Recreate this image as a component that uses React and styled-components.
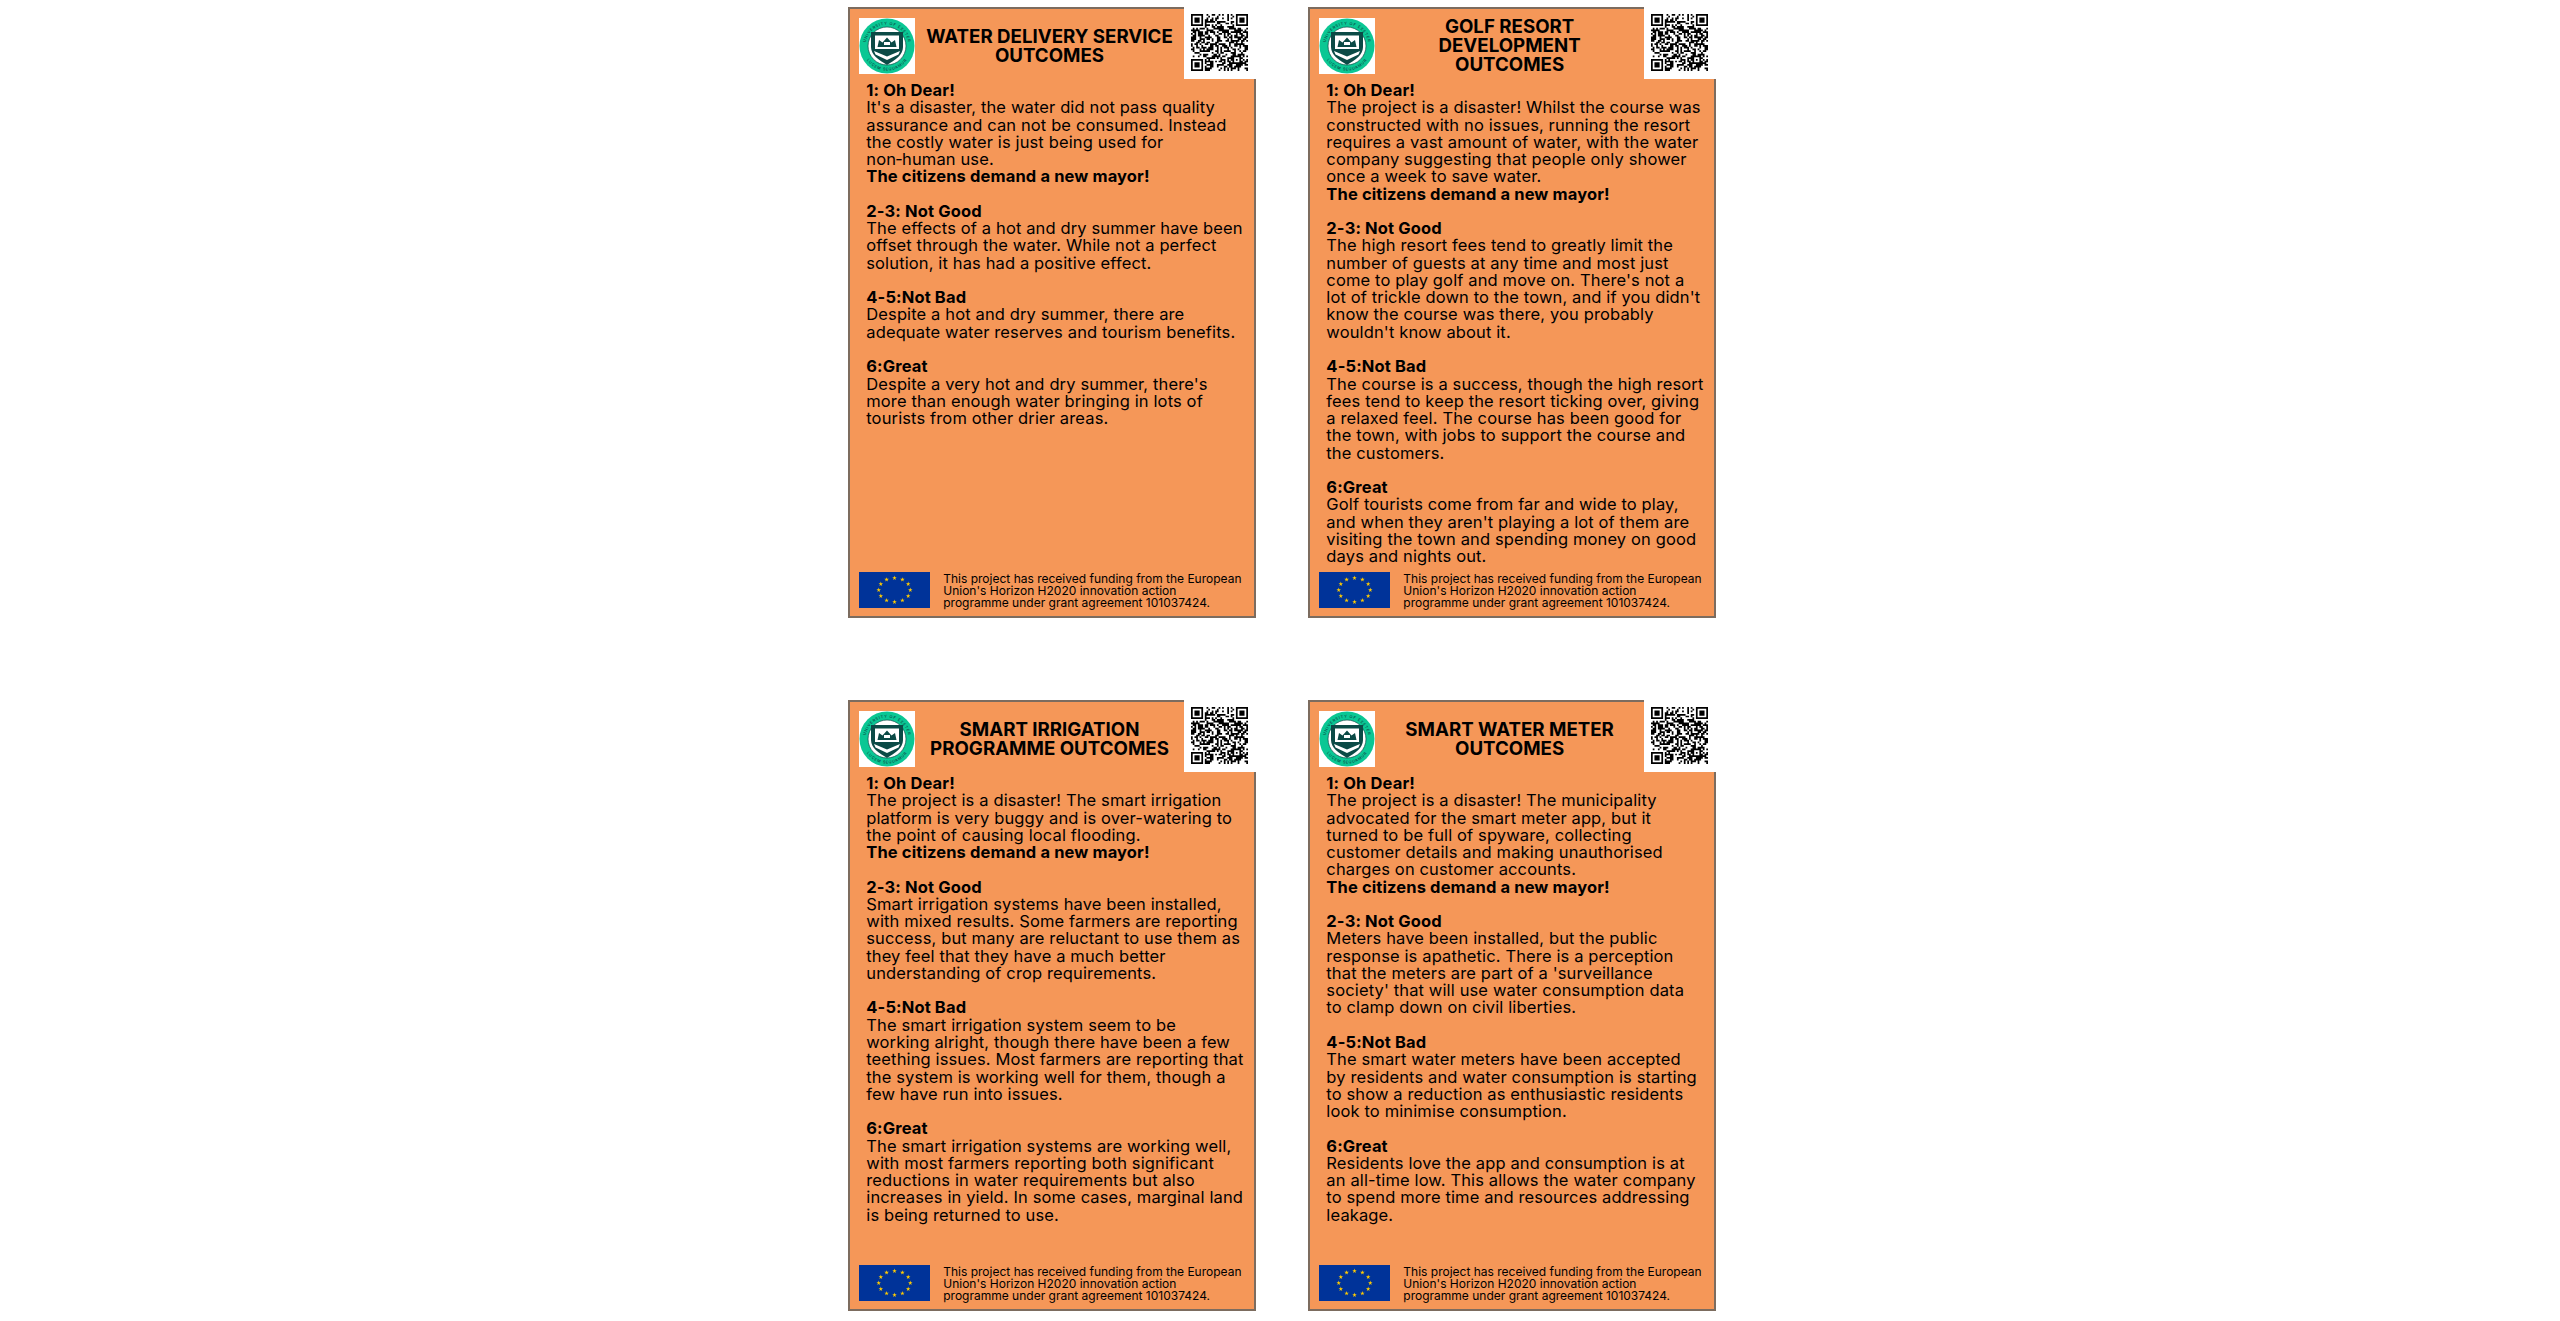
import React from 'react';
import styled, { createGlobalStyle } from 'styled-components';

const cards = [
  {
    title: 'WATER DELIVERY SERVICE OUTCOMES',
    sections: [
      ['1: Oh Dear!', "It's a disaster, the water did not pass quality assurance and can not be consumed. Instead the costly water is just being used for non\u2011human use.", 'The citizens demand a new mayor!'],
      ['2-3: Not Good', 'The effects of a hot and dry summer have been offset through the water. While not a perfect solution, it has had a positive effect.'],
      ['4-5:Not Bad', 'Despite a hot and dry summer, there are adequate water reserves and tourism benefits.'],
      ['6:Great', "Despite a very hot and dry summer, there's more than enough water bringing in lots of tourists from other drier areas."],
    ],
  },
  {
    title: 'GOLF RESORT DEVELOPMENT OUTCOMES',
    sections: [
      ['1: Oh Dear!', 'The project is a disaster! Whilst the course was constructed with no issues, running the resort requires a vast amount of water, with the water company suggesting that people only shower once a week to save water.', 'The citizens demand a new mayor!'],
      ['2-3: Not Good', "The high resort fees tend to greatly limit the number of guests at any time and most just come to play golf and move on. There's not a lot of trickle down to the town, and if you didn't know the course was there, you probably wouldn't know about it."],
      ['4-5:Not Bad', 'The course is a success, though the high resort fees tend to keep the resort ticking over, giving a relaxed feel. The course has been good for the town, with jobs to support the course and the customers.'],
      ['6:Great', "Golf tourists come from far and wide to play, and when they aren't playing a lot of them are visiting the town and spending money on good days and nights out."],
    ],
  },
  {
    title: 'SMART IRRIGATION PROGRAMME OUTCOMES',
    sections: [
      ['1: Oh Dear!', 'The project is a disaster! The smart irrigation platform is very buggy and is over-watering to the point of causing local flooding.', 'The citizens demand a new mayor!'],
      ['2-3: Not Good', 'Smart irrigation systems have been installed, with mixed results. Some farmers are reporting success, but many are reluctant to use them as they feel that they have a much better understanding of crop requirements.'],
      ['4-5:Not Bad', 'The smart irrigation system seem to be working alright, though there have been a few teething issues. Most farmers are reporting that the system is working well for them, though a few have run into issues.'],
      ['6:Great', 'The smart irrigation systems are working well, with most farmers reporting both significant reductions in water requirements but also increases in yield. In some cases, marginal land is being returned to use.'],
    ],
  },
  {
    title: 'SMART WATER METER OUTCOMES',
    sections: [
      ['1: Oh Dear!', 'The project is a disaster! The municipality advocated for the smart meter app, but it turned to be full of spyware, collecting customer details and making unauthorised charges on customer accounts.', 'The citizens demand a new mayor!'],
      ['2-3: Not Good', "Meters have been installed, but the public response is apathetic. There is a perception that the meters are part of a 'surveillance society' that will use water consumption data to clamp down on civil liberties."],
      ['4-5:Not Bad', 'The smart water meters have been accepted by residents and water consumption is starting to show a reduction as enthusiastic residents look to minimise consumption.'],
      ['6:Great', 'Residents love the app and consumption is at an all-time low. This allows the water company to spend more time and resources addressing leakage.'],
    ],
  },
];

const GlobalStyle = createGlobalStyle`
  html, body {
    margin: 0;
    padding: 0;
    background: #fff;
    font-family: Inter, "Liberation Sans", sans-serif;
    color: #000;
  }
`;

const Page = styled.div`
  display: grid;
  grid-template-columns: 407.5px 407.5px;
  grid-auto-rows: 611px;
  column-gap: 52.6px;
  row-gap: 82px;
  padding: 7px 0 0 848.25px;
`;

const Card = styled.article`
  position: relative;
  display: flex;
  flex-direction: column;
  box-sizing: border-box;
  background: #f59758;
  border: 2px solid #7c6c5f;
`;

const Header = styled.header`
  display: flex;
  align-items: center;
  height: 56px;
  padding: 9px 72px 8px 9px;
`;

const LogoBox = styled.svg`
  flex: none;
  display: block;
  width: 56px;
  height: 56px;
`;

const Title = styled.h2`
  flex: 1;
  margin: 0;
  padding: 0 7px 1px 9px;
  font-size: 18.7px;
  line-height: 19px;
  font-weight: 700;
  text-align: center;
`;

const QrBox = styled.div`
  position: absolute;
  top: -2px;
  right: -2px;
  width: 72px;
  height: 72px;
  box-sizing: border-box;
  padding: 7px 8px 8px 7px;
  background: #fff;
`;

const QrSvg = styled.svg`
  display: block;
  width: 57px;
  height: 57px;
`;

const Body = styled.div`
  padding: 0 10px 0 16px;
  font-size: 16.5px;
  line-height: 17.27px;
  letter-spacing: 0.13px;
`;

const Section = styled.section`
  margin-bottom: 17.27px;

  &:last-child {
    margin-bottom: 0;
  }
`;

const Heading = styled.div`
  font-weight: 700;
`;

const Copy = styled.div`
  font-weight: 400;
`;

const Footer = styled.footer`
  display: flex;
  align-items: center;
  gap: 13px;
  margin-top: auto;
  padding: 0 9px 7px;
`;

const Flag = styled.svg`
  flex: none;
  display: block;
  width: 71px;
  height: 36px;
`;

const Funding = styled.div`
  max-width: 304px;
  padding-top: 3px;
  font-size: 12px;
  line-height: 12px;
`;

const qrSize = 33;

// not the real code, just a stable module pattern with the finder and alignment squares
const qrPath = (() => {
  let seed = 20210;
  const next = () => {
    seed = (seed * 1103515245 + 12345) % 2147483648;
    return seed / 2147483648;
  };
  const reserved = (x, y) =>
    (x < 8 && y < 8) ||
    (x >= qrSize - 8 && y < 8) ||
    (x < 8 && y >= qrSize - 8) ||
    (x >= 24 && x < 29 && y >= 24 && y < 29);
  let d = '';
  for (let y = 0; y < qrSize; y++) {
    for (let x = 0; x < qrSize; x++) {
      const on = next() > 0.5;
      if (on && !reserved(x, y)) d += `M${x} ${y}h1v1h-1z`;
    }
  }
  [[0, 0], [qrSize - 7, 0], [0, qrSize - 7]].forEach(([x, y]) => {
    d += `M${x} ${y}h7v7h-7zM${x + 1} ${y + 1}v5h5v-5zM${x + 2} ${y + 2}h3v3h-3z`;
  });
  d += 'M24 24h5v5h-5zM25 25v3h3v-3zM26 26h1v1h-1z';
  return d;
})();

const Qr = () => (
  <QrBox>
    <QrSvg viewBox={`0 0 ${qrSize} ${qrSize}`}>
      <path d={qrPath} fill="#000" fillRule="evenodd" />
    </QrSvg>
  </QrBox>
);

const Logo = ({ id }) => (
  <LogoBox viewBox="0 0 56 56">
    <rect width="56" height="56" fill="#fff" />
    <circle cx="28" cy="28" r="27.5" fill="#0ac794" />
    <circle cx="28" cy="28" r="19" fill="#fff" stroke="#0b4a46" strokeWidth="0.7" />
    <defs>
      <path id={`${id}-top`} d="M6.6 28a21.4 21.4 0 0 1 42.8 0" />
      <path id={`${id}-bottom`} d="M3.4 28a24.6 24.6 0 0 0 49.2 0" />
    </defs>
    <text fontSize="3.9" fontWeight="500" letterSpacing="0.7" fill="#0b4a46" textAnchor="middle">
      <textPath href={`#${id}-top`} startOffset="50%">UNIVERSITY OF EXETER</textPath>
    </text>
    <text fontSize="3.9" fontWeight="500" letterSpacing="0.7" fill="#0b4a46" textAnchor="middle">
      <textPath href={`#${id}-bottom`} startOffset="50%">LUCEM SEQUAMUR</textPath>
    </text>
    <path d="M12 14h32v15c0 8-8 13-16 18-8-5-16-10-16-18z" fill="#0b4a46" />
    <path d="M16 17.5h24v13.5H16z" fill="#fff" />
    <path d="M18.5 29l1.5-7 3.5 2.5L28 19.5l4.5 5 3.5-2.5 1.5 7z" fill="#0b4a46" />
    <path d="M25 24h6v3h-6z" fill="#fff" />
    <path d="M15 33l13 5.5L41 33l-1.5 3.5L28 42l-11.5-5.5z" fill="#fff" />
  </LogoBox>
);

const starPoints = (cx, cy, r) => {
  const pts = [];
  for (let i = 0; i < 10; i++) {
    const a = -Math.PI / 2 + (i * Math.PI) / 5;
    const radius = i % 2 === 0 ? r : r * 0.38;
    pts.push(`${(cx + radius * Math.cos(a)).toFixed(2)},${(cy + radius * Math.sin(a)).toFixed(2)}`);
  }
  return pts.join(' ');
};

const EuFlag = () => (
  <Flag viewBox="0 0 71 36">
    <rect width="71" height="36" fill="#003399" />
    {Array.from({ length: 12 }, (_, i) => {
      const a = (i * Math.PI) / 6;
      return (
        <polygon
          key={i}
          points={starPoints(35.5 + 15.8 * Math.sin(a), 18 - 12 * Math.cos(a), 2.4)}
          fill="#ffcc00"
        />
      );
    })}
  </Flag>
);

const OutcomeCard = ({ card, index }) => (
  <Card>
    <Header>
      <Logo id={`crest-${index}`} />
      <Title>{card.title}</Title>
    </Header>
    <Qr />
    <Body>
      {card.sections.map(([head, copy, closing]) => (
        <Section key={head}>
          <Heading>{head}</Heading>
          <Copy>{copy}</Copy>
          {closing && <Heading>{closing}</Heading>}
        </Section>
      ))}
    </Body>
    <Footer>
      <EuFlag />
      <Funding>
        This project has received funding from the European Union's Horizon H2020 innovation action programme under grant agreement 101037424.
      </Funding>
    </Footer>
  </Card>
);

export default function App() {
  return (
    <>
      <GlobalStyle />
      <Page>
        {cards.map((card, i) => (
          <OutcomeCard key={card.title} card={card} index={i} />
        ))}
      </Page>
    </>
  );
}
